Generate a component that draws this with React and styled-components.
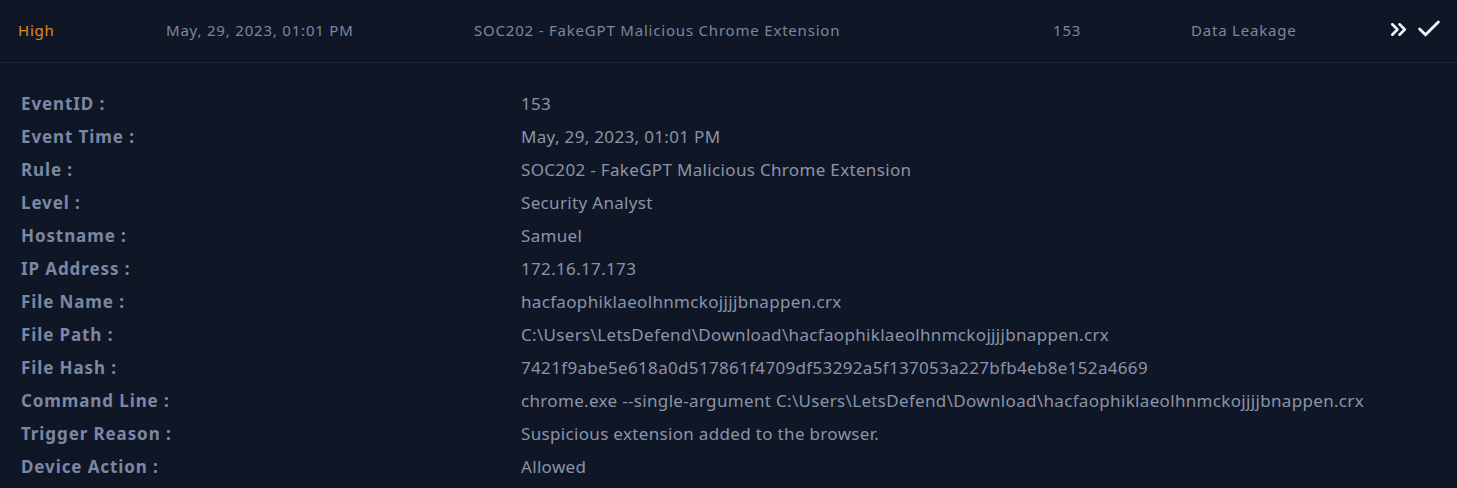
import styled, { createGlobalStyle } from 'styled-components';
import { ChevronsRight, Check } from 'lucide-react';

const GlobalStyle = createGlobalStyle`
  body {
    margin: 0;
    background: #0f1727;
    font-family: "Noto Sans", "Open Sans", sans-serif;
  }
`;

const Panel = styled.div`
  background: #0f1727;
  width: 1457px;
  min-height: 488px;
`;

const HeaderRow = styled.div`
  display: grid;
  grid-template-columns: 148px 308px 579px 138px 1fr auto;
  align-items: center;
  height: 62px;
  padding: 0 14px 0 18px;
  border-bottom: 1px solid #1c2540;
  font-size: 15px;
  letter-spacing: 0.8px;
  color: #7d869c;
`;

const Cell = styled.span`
  color: ${(p) => p.$color || 'inherit'};
  white-space: nowrap;
  padding-bottom: 2px;
`;

const Actions = styled.div`
  display: flex;
  align-items: center;
  gap: 4px;
  color: #f1f5f9;
  padding-bottom: 4px;
`;

const Details = styled.div`
  display: grid;
  grid-template-columns: 500px 1fr;
  padding: 24px 21px 8px;
  line-height: 33px;
  font-size: 17px;
`;

const Label = styled.div`
  font-weight: 700;
  letter-spacing: 0.9px;
  color: #7d86a3;
`;

const Value = styled.div`
  color: #8c93a8;
  letter-spacing: 0.33px;
  white-space: nowrap;
`;

const rows = [
  ['EventID', '153'],
  ['Event Time', 'May, 29, 2023, 01:01 PM'],
  ['Rule', 'SOC202 - FakeGPT Malicious Chrome Extension'],
  ['Level', 'Security Analyst'],
  ['Hostname', 'Samuel'],
  ['IP Address', '172.16.17.173'],
  ['File Name', 'hacfaophiklaeolhnmckojjjjbnappen.crx'],
  ['File Path', 'C:\\Users\\LetsDefend\\Download\\hacfaophiklaeolhnmckojjjjbnappen.crx'],
  ['File Hash', '7421f9abe5e618a0d517861f4709df53292a5f137053a227bfb4eb8e152a4669'],
  ['Command Line', 'chrome.exe --single-argument C:\\Users\\LetsDefend\\Download\\hacfaophiklaeolhnmckojjjjbnappen.crx'],
  ['Trigger Reason', 'Suspicious extension added to the browser.'],
  ['Device Action', 'Allowed'],
];

export default function App() {
  return (
    <Panel>
      <GlobalStyle />
      <HeaderRow>
        <Cell $color="#e08a10">High</Cell>
        <Cell>May, 29, 2023, 01:01 PM</Cell>
        <Cell>SOC202 - FakeGPT Malicious Chrome Extension</Cell>
        <Cell>153</Cell>
        <Cell>Data Leakage</Cell>
        <Actions>
          <ChevronsRight size={25} strokeWidth={2.5} />
          <Check size={28} strokeWidth={2.5} />
        </Actions>
      </HeaderRow>
      <Details>
        {rows.map(([label, value]) => (
          <>
            <Label key={label}>{label} :</Label>
            <Value key={label + '-v'}>{value}</Value>
          </>
        ))}
      </Details>
    </Panel>
  );
}
